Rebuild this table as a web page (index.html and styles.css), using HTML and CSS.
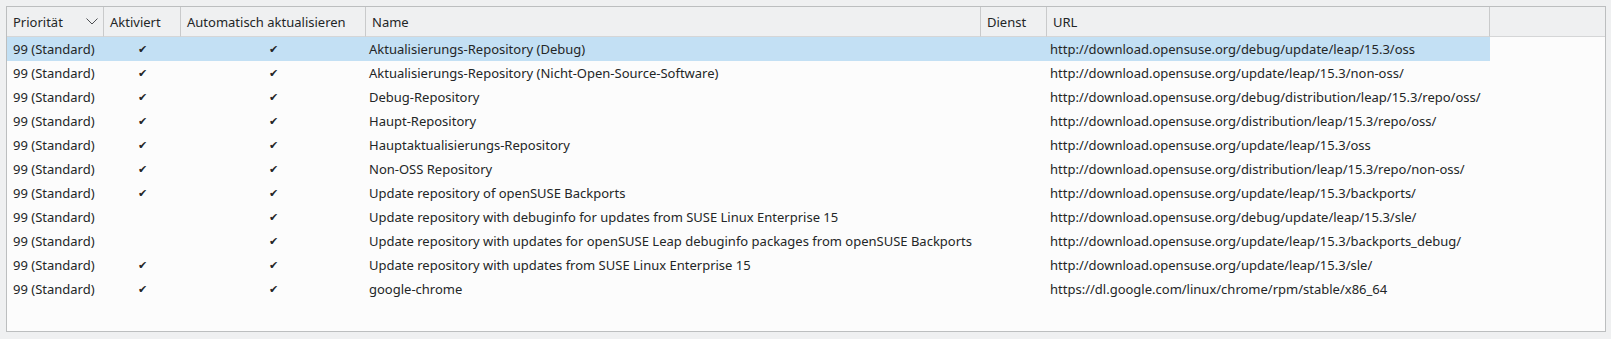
FILE: index.html
```html
<!DOCTYPE html>
<html lang="de">
<head>
  <meta charset="UTF-8">
  <title>Repositories</title>
  <link rel="stylesheet" href="styles.css">
</head>
<body>
  <div class="frame">
    <table class="repos">
      <colgroup>
        <col class="c-prio">
        <col class="c-on">
        <col class="c-auto">
        <col class="c-name">
        <col class="c-svc">
        <col class="c-url">
        <col class="c-rest">
      </colgroup>
      <thead>
        <tr>
          <th>
            <div class="sortable">
              <span>Priorität</span>
              <svg class="chev" width="12" height="7" viewBox="0 0 12 7"><polyline points="0.5,0.5 6,6 11.5,0.5" fill="none" stroke="#4d4f52" stroke-width="1"/></svg>
            </div>
          </th>
          <th>Aktiviert</th>
          <th>Automatisch aktualisieren</th>
          <th>Name</th>
          <th>Dienst</th>
          <th>URL</th>
          <th class="filler"></th>
        </tr>
      </thead>
      <tbody>
        <tr class="selected">
          <td>99 (Standard)</td><td class="chk">✔</td><td class="chk">✔</td>
          <td>Aktualisierungs-Repository (Debug)</td><td></td>
          <td>http://download.opensuse.org/debug/update/leap/15.3/oss</td><td class="filler"></td>
        </tr>
        <tr>
          <td>99 (Standard)</td><td class="chk">✔</td><td class="chk">✔</td>
          <td>Aktualisierungs-Repository (Nicht-Open-Source-Software)</td><td></td>
          <td>http://download.opensuse.org/update/leap/15.3/non-oss/</td><td class="filler"></td>
        </tr>
        <tr>
          <td>99 (Standard)</td><td class="chk">✔</td><td class="chk">✔</td>
          <td>Debug-Repository</td><td></td>
          <td>http://download.opensuse.org/debug/distribution/leap/15.3/repo/oss/</td><td class="filler"></td>
        </tr>
        <tr>
          <td>99 (Standard)</td><td class="chk">✔</td><td class="chk">✔</td>
          <td>Haupt-Repository</td><td></td>
          <td>http://download.opensuse.org/distribution/leap/15.3/repo/oss/</td><td class="filler"></td>
        </tr>
        <tr>
          <td>99 (Standard)</td><td class="chk">✔</td><td class="chk">✔</td>
          <td>Hauptaktualisierungs-Repository</td><td></td>
          <td>http://download.opensuse.org/update/leap/15.3/oss</td><td class="filler"></td>
        </tr>
        <tr>
          <td>99 (Standard)</td><td class="chk">✔</td><td class="chk">✔</td>
          <td>Non-OSS Repository</td><td></td>
          <td>http://download.opensuse.org/distribution/leap/15.3/repo/non-oss/</td><td class="filler"></td>
        </tr>
        <tr>
          <td>99 (Standard)</td><td class="chk">✔</td><td class="chk">✔</td>
          <td>Update repository of openSUSE Backports</td><td></td>
          <td>http://download.opensuse.org/update/leap/15.3/backports/</td><td class="filler"></td>
        </tr>
        <tr>
          <td>99 (Standard)</td><td class="chk"></td><td class="chk">✔</td>
          <td>Update repository with debuginfo for updates from SUSE Linux Enterprise 15</td><td></td>
          <td>http://download.opensuse.org/debug/update/leap/15.3/sle/</td><td class="filler"></td>
        </tr>
        <tr>
          <td>99 (Standard)</td><td class="chk"></td><td class="chk">✔</td>
          <td>Update repository with updates for openSUSE Leap debuginfo packages from openSUSE Backports</td><td></td>
          <td>http://download.opensuse.org/update/leap/15.3/backports_debug/</td><td class="filler"></td>
        </tr>
        <tr>
          <td>99 (Standard)</td><td class="chk">✔</td><td class="chk">✔</td>
          <td>Update repository with updates from SUSE Linux Enterprise 15</td><td></td>
          <td>http://download.opensuse.org/update/leap/15.3/sle/</td><td class="filler"></td>
        </tr>
        <tr>
          <td>99 (Standard)</td><td class="chk">✔</td><td class="chk">✔</td>
          <td>google-chrome</td><td></td>
          <td>https://dl.google.com/linux/chrome/rpm/stable/x86_64</td><td class="filler"></td>
        </tr>
      </tbody>
    </table>
  </div>
</body>
</html>
```

FILE: styles.css
```css
html, body {
  margin: 0; padding: 0;
  background: #eff0f1;
  font-family: "Noto Sans", sans-serif;
  font-size: 13px;
  color: #232627;
}
body {
  padding: 6px 5px 7px 6px;
}

/* outer view frame */
.frame {
  width: 1600px; height: 326px;
  box-sizing: border-box;
  border: 1px solid #bcbebf;
  background: #fcfcfc;
  overflow: hidden;
}

.repos {
  table-layout: fixed;
  border-collapse: separate;
  border-spacing: 0;
  width: 1598px;
}
.c-prio { width: 97px; }
.c-on   { width: 77px; }
.c-auto { width: 185px; }
.c-name { width: 615px; }
.c-svc  { width: 66px; }
.c-url  { width: 443px; }
.c-rest { width: 115px; }

/* header */
.repos th {
  height: 29px;
  padding: 0 6px;
  text-align: left;
  font-weight: normal;
  background: #eff0f1;
  border-right: 1px solid #c9cacb;
  border-bottom: 1px solid #d5d6d7;
  white-space: nowrap;
  overflow: hidden;
}
.repos th.filler { border-right: none; }
.sortable {
  display: flex; align-items: center;
  justify-content: space-between;
}
.chev { margin-right: -1px; }

/* rows */
.repos td {
  height: 24px;
  padding: 0 3px;
  white-space: nowrap;
  overflow: hidden;
}
.repos td:first-child { padding-left: 6px; }
.repos td.chk {
  text-align: center;
  font-family: "DejaVu Sans", sans-serif;
  font-size: 11px;
  padding: 0;
}
.repos tr.selected td { background: #c3e0f4; }
.repos tr.selected td.filler { background: transparent; }
```
